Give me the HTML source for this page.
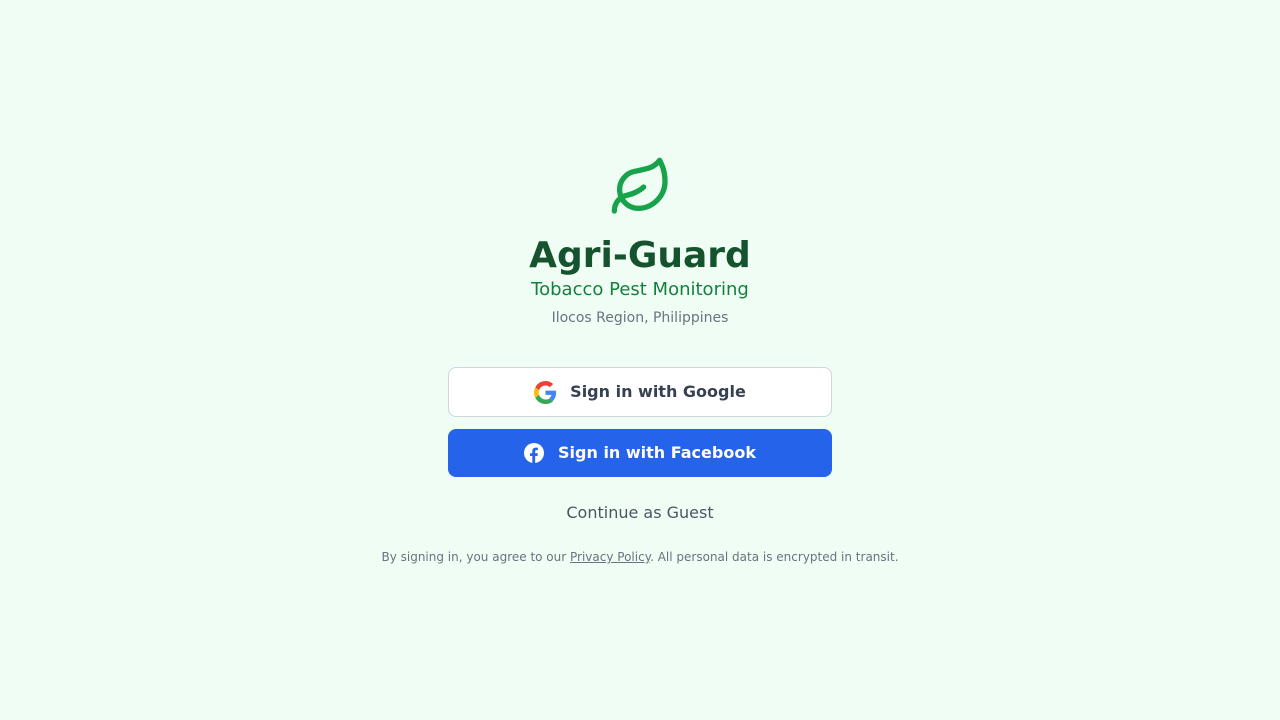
<!DOCTYPE html>
<html><head><meta charset="utf-8"><style>
body{margin:0;background:#f0fdf4;font-family:"DejaVu Sans","Liberation Sans",sans-serif;width:1280px;height:720px;position:relative}
.c{position:absolute;left:0;width:1280px;text-align:center;white-space:nowrap}
.btn{position:absolute;left:448px;width:384px;box-sizing:border-box;border-radius:8px;display:flex;align-items:center;justify-content:center;font-weight:bold;font-size:16px;gap:12px}
</style></head><body>
<svg style="position:absolute;left:609px;top:155px" width="64" height="64" viewBox="0 0 24 24" fill="none" stroke="#16a34a" stroke-width="2" stroke-linecap="round" stroke-linejoin="round"><path d="M11 20A7 7 0 0 1 9.8 6.1C15.5 5 17 4.48 19 2c1 2 2 4.18 2 8 0 5.5-4.78 10-10 10Z"/><path d="M2 21c0-3 1.85-5.36 5.08-6C9.5 14.52 12 13 13 12"/></svg>
<div class="c" style="top:234px;font-size:36px;font-weight:bold;color:#14532d;line-height:44px">Agri-Guard</div>
<div class="c" style="top:278px;font-size:18px;color:#15803d;line-height:24px">Tobacco Pest Monitoring</div>
<div class="c" style="top:308px;font-size:14px;color:#6b7280;line-height:20px">Ilocos Region, Philippines</div>
<div class="btn" style="top:367px;height:50px;background:#fff;border:1px solid #d1d5db;color:#374151;padding-top:0">
<svg width="23" height="23" viewBox="0 0 48 48"><path fill="#EA4335" d="M24 9.5c3.5 0 6.6 1.2 9.1 3.6l6.8-6.8C35.8 2.4 30.3 0 24 0 14.6 0 6.6 5.4 2.7 13.3l7.9 6.1C12.5 13.7 17.8 9.5 24 9.5z"/><path fill="#4285F4" d="M46.1 24.5c0-1.6-.1-3.1-.4-4.5H24v9h12.4c-.5 2.9-2.2 5.3-4.6 6.9l7.4 5.8c4.3-4 6.9-9.9 6.9-17.2z"/><path fill="#FBBC05" d="M10.5 28.6c-.5-1.4-.8-3-.8-4.6s.3-3.2.8-4.6l-7.9-6.1C1 16.5 0 20.1 0 24s1 7.5 2.7 10.7l7.8-6.1z"/><path fill="#34A853" d="M24 48c6.5 0 11.9-2.1 15.9-5.8l-7.4-5.8c-2.1 1.4-4.8 2.3-8.5 2.3-6.2 0-11.5-4.2-13.4-9.9l-7.9 6.1C6.6 42.6 14.6 48 24 48z"/></svg>
<span style="margin-left:1px;margin-top:-2px">Sign in with Google</span></div>
<div class="btn" style="top:429px;height:48px;background:#2563eb;color:#fff;gap:14px">
<svg width="20" height="20" viewBox="0 0 24 24"><circle cx="12" cy="12" r="12" fill="#fff"/><path fill="#2563eb" d="M13.4 24v-8.4h2.8l.4-3.3h-3.2v-2.1c0-.9.3-1.6 1.6-1.6h1.7V5.7c-.3 0-1.3-.1-2.5-.1-2.5 0-4.2 1.5-4.2 4.3v2.4H7.2v3.3H10V24z"/></svg>
<span style="margin-top:-1px">Sign in with Facebook</span></div>
<div class="c" style="top:503px;font-size:16px;color:#4b5563;line-height:20px">Continue as Guest</div>
<div class="c" style="top:549px;font-size:12px;color:#6b7280;line-height:16px">By signing in, you agree to our <u>Privacy Policy</u>. All personal data is encrypted in transit.</div>
</body></html>
